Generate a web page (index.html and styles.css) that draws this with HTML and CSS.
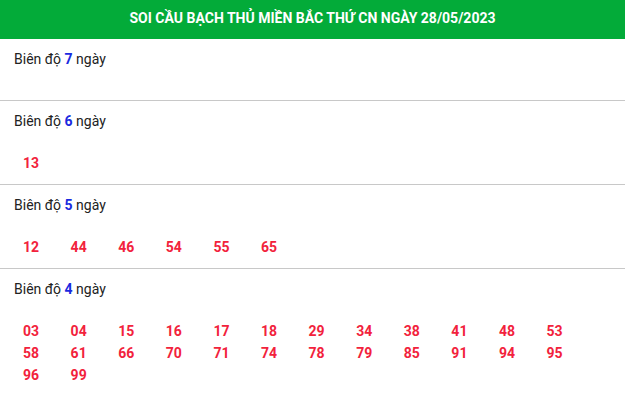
FILE: index.html
```html
<!DOCTYPE html>
<html lang="vi">
<head>
<meta charset="utf-8">
<title>Soi cầu bạch thủ miền Bắc</title>
<link rel="stylesheet" href="styles.css">
</head>
<body>
<div class="box">
  <h2 class="head">SOI CẦU BẠCH THỦ MIỀN BẮC THỨ CN NGÀY 28/05/2023</h2>
  <div class="sec">
    <div class="ttl">Biên độ <b>7</b> ngày</div>
    <div class="nums"></div>
  </div>
  <div class="sec">
    <div class="ttl">Biên độ <b>6</b> ngày</div>
    <div class="nums"><span>13</span></div>
  </div>
  <div class="sec">
    <div class="ttl">Biên độ <b>5</b> ngày</div>
    <div class="nums"><span>12</span><span>44</span><span>46</span><span>54</span><span>55</span><span>65</span></div>
  </div>
  <div class="sec">
    <div class="ttl">Biên độ <b>4</b> ngày</div>
    <div class="nums"><span>03</span><span>04</span><span>15</span><span>16</span><span>17</span><span>18</span><span>29</span><span>34</span><span>38</span><span>41</span><span>48</span><span>53</span><span>58</span><span>61</span><span>66</span><span>70</span><span>71</span><span>74</span><span>78</span><span>79</span><span>85</span><span>91</span><span>94</span><span>95</span><span>96</span><span>99</span></div>
  </div>
</div>
</body>
</html>
```
FILE: styles.css
```css
html, body {
  margin: 0;
  padding: 0;
  background: #fff;
}
body {
  font-family: Roboto, "Noto Sans", sans-serif;
  font-size: 14px;
  color: #222;
}
.head {
  margin: 0;
  height: 39px;
  line-height: 36px;
  background: #03ab39;
  color: #fff;
  font-size: 14px;
  font-weight: 700;
  text-align: center;
}
.sec {
  padding: 10px 0;
  border-bottom: 1px solid #c8c8c8;
}
.ttl {
  line-height: 20px;
  padding-left: 14px;
}
.ttl b {
  color: #1a2ae0;
  font-weight: 700;
}
.nums {
  margin-top: 21px;
  padding-left: 23px;
  display: grid;
  grid-template-columns: repeat(12, 47.6px);
}
.nums span {
  line-height: 22px;
  color: #f2223c;
  font-weight: 700;
}
```
